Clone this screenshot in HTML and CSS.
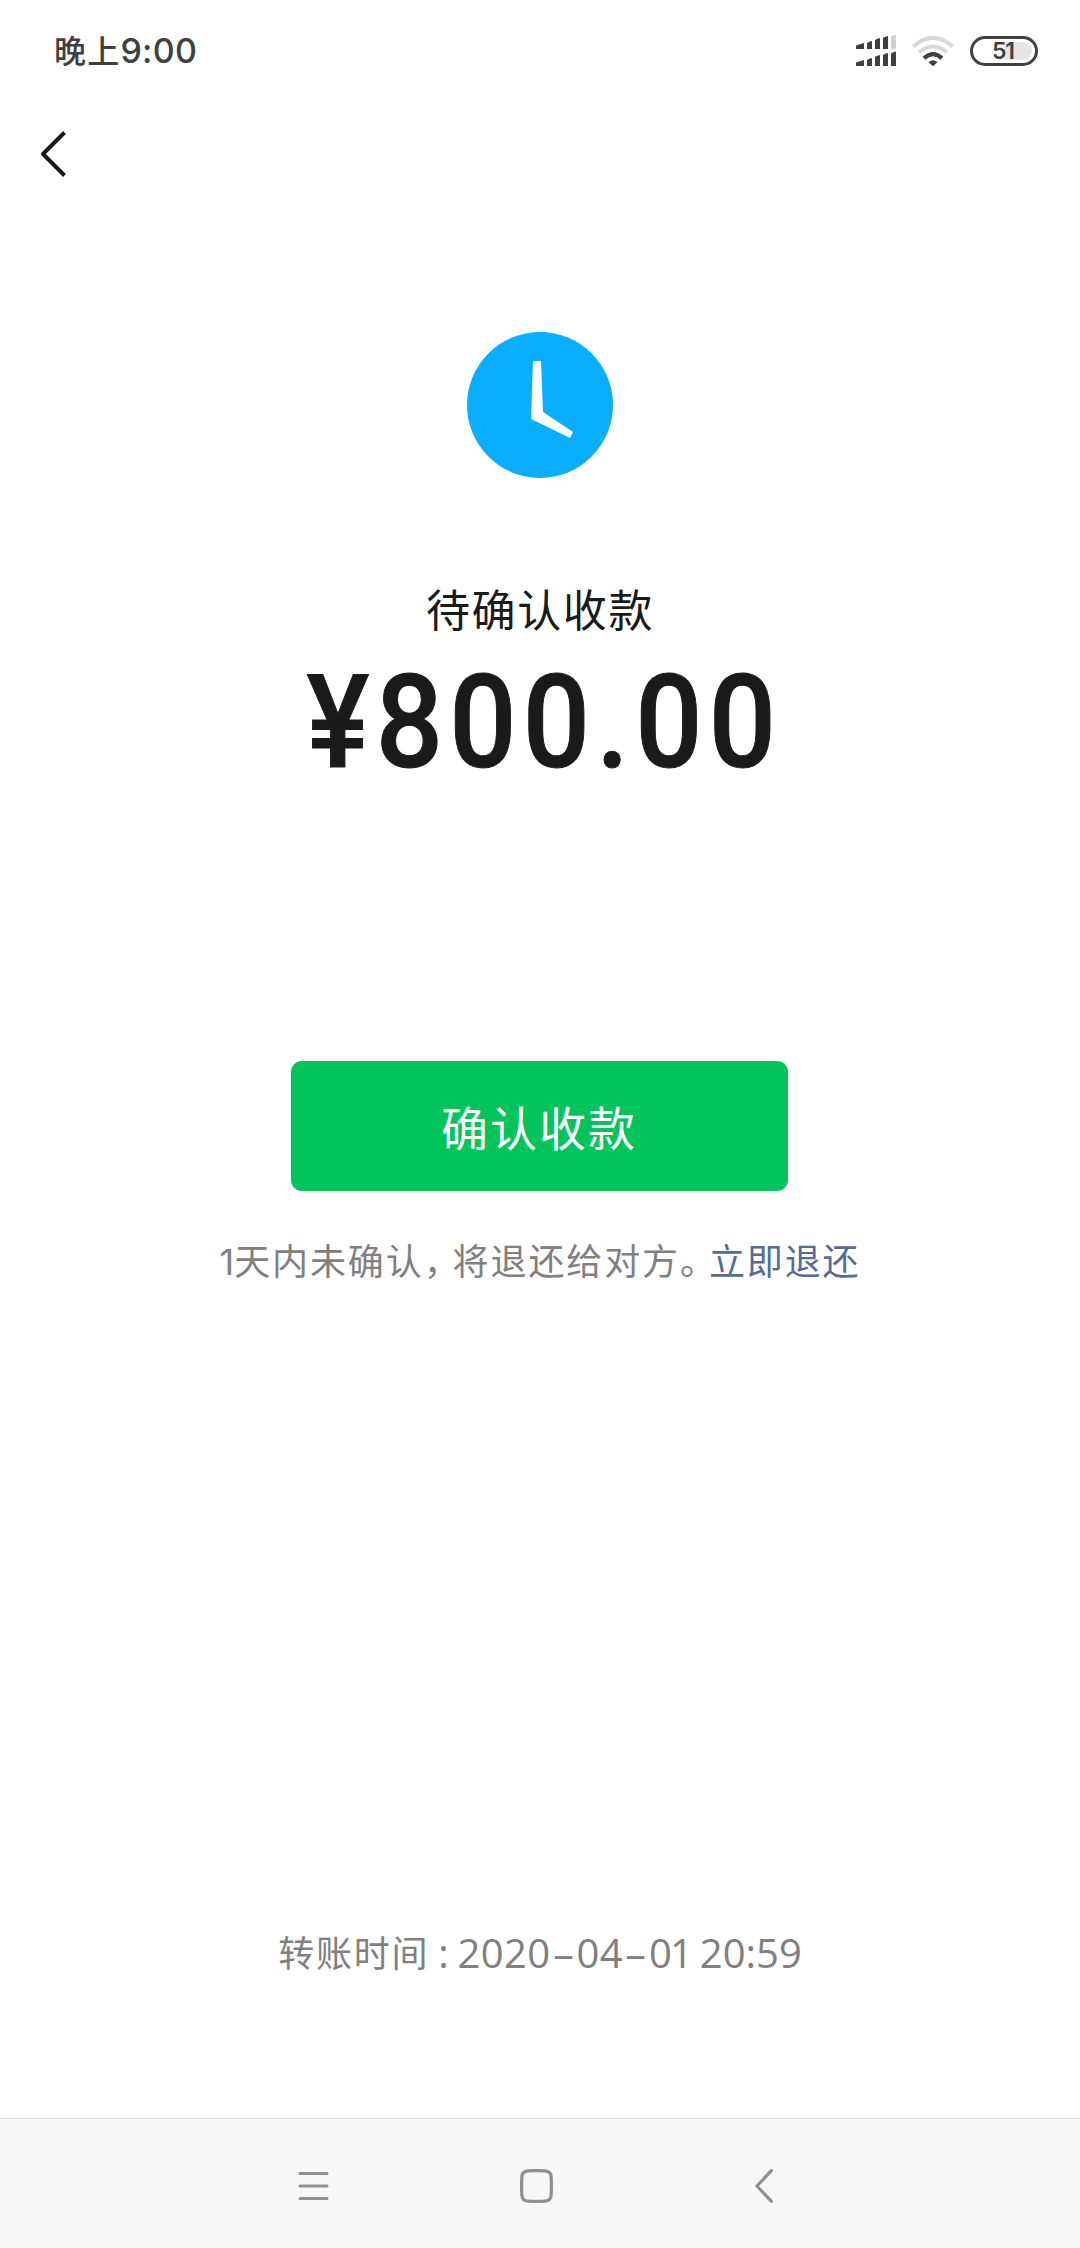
FILE: index.html
```html
<!DOCTYPE html>
<html lang="zh-CN">
<head>
<meta charset="utf-8">
<title>待确认收款</title>
<link rel="stylesheet" href="styles.css">
</head>
<body>
<div class="screen">
  <header class="status">
    <div class="time"><span class="period">晚上</span>9:00</div>
    <div class="indicators">
      <svg class="signal" width="40" height="32" viewBox="0 0 40 32" fill="#404040">
        <path d="M0 10.500q4-1.500 8-2.500v6H0zM11 8q2-1.500 5-2v8h-5zM19 5q2-1.500 5-2v11h-5zM27 3q2-1.500 5-2v13h-5z"/>
        <path fill="#d0d0d0" d="M35 1.500Q37 0 40 0v14h-5z"/>
        <path d="M0 27.500q4-1.500 8-2.500v6H0zM11 25q2-1.500 5-2v8h-5zM19 22q2-1.500 5-2v11h-5zM27 20q2-1.500 5-2v13h-5zM35 18.500q2-1.500 5-2v14.500h-5z"/>
      </svg>
      <svg class="wifi" width="42" height="30" viewBox="0 0 42 30" fill="none" stroke-width="4">
        <path stroke="#d8d8d8" d="M1.200 10.500Q21-6.500 40.800 10.500M7 16.500Q21 4.500 35 16.500"/>
        <path stroke="#404040" d="M12 22.300Q21 14 30 22.300"/>
        <path fill="#404040" d="M16.500 26Q21 22.500 25.500 26L22 29.500q-1 .8-2 0z"/>
      </svg>
      <div class="battery"><span class="level"></span><span class="percent">51</span></div>
    </div>
  </header>
  <div class="toolbar">
    <svg width="28" height="50" viewBox="0 0 28 50" fill="none" stroke="#1a1a1a" stroke-width="4" stroke-linejoin="round"><path d="M25.500 3.500L4 25l21.500 21.500"/></svg>
  </div>
  <main class="content">
    <svg class="clock" width="146" height="146" viewBox="0 0 146 146"><circle cx="73" cy="73" r="73" fill="#0aaeff"/><path fill="#fff" d="M66 29h8l2 51 30 20-3 6-39-19z"/></svg>
    <h1 class="title">待确认收款</h1>
    <div class="amount">¥800.00</div>
    <button class="confirm">确认收款</button>
    <p class="note"><span class="day">1</span>天内未确认<span class="comma">，</span>将退还给对方<span class="stop">。</span><a class="refund">立即退还</a></p>
    <p class="transfer"><span class="label">转账时间</span><span class="colon">:</span><span class="date">2020<span class="dash">-</span>04<span class="dash">-</span><span class="last">01</span></span><span class="clocktime">20:59</span></p>
  </main>
  <nav class="navbar">
    <svg class="menu" width="31" height="30" viewBox="0 0 31 30" stroke="#8f8f8f" stroke-width="3" stroke-linecap="round"><path d="M2 2.500h27M2 15h27M2 27.500h27"/></svg>
    <svg class="home" width="33" height="34" viewBox="0 0 31 32" fill="none" stroke="#8f8f8f" stroke-width="3"><path d="M7.500 1.700Q15.500 1.300 23.500 1.700 29 2 29.300 7.500q.4 8.500 0 17-.3 5.500-5.800 5.800-8 .4-16 0-5.500-.3-5.800-5.800-.4-8.500 0-17Q2 2 7.500 1.700z"/></svg>
    <svg class="back" width="19" height="34" viewBox="0 0 18 32" fill="none" stroke="#8f8f8f" stroke-width="3" stroke-linecap="round" stroke-linejoin="round"><path d="M15.500 1.500L1.800 16l13.700 14.500"/></svg>
  </nav>
</div>
</body>
</html>
```
FILE: styles.css
```css
body { margin: 0; background: #fff; font-family: "Inter", "Noto Sans CJK SC", sans-serif; }
svg { display: block; }
.screen { width: 1080px; height: 2248px; display: flex; flex-direction: column; }
.status { height: 102px; padding: 0 42px 0 54px; display: flex; justify-content: space-between; align-items: center; box-sizing: border-box; color: #404040; }
.time { font-size: 34px; font-weight: 500; letter-spacing: .3px; line-height: 50px; white-space: nowrap; }
.period { font-size: 32px; letter-spacing: 1.2px; }
.indicators { display: flex; align-items: center; }
.wifi { margin-left: 16px; }
.battery { position: relative; width: 68px; height: 30px; box-sizing: border-box; border: 3px solid #404040; border-radius: 15px; margin-left: 16px; padding-right: 2px; font-size: 23px; font-weight: 600; line-height: 24px; letter-spacing: -1px; text-align: center; }
.level { position: absolute; right: 3px; top: 3px; width: 28px; height: 18px; border-radius: 0 9px 9px 0; background: #e5e5e5; }
.percent { position: relative; }
.toolbar { height: 104px; padding-left: 39px; display: flex; align-items: center; }
.content { flex: 1; display: flex; flex-direction: column; align-items: center; }
.clock { margin-top: 126px; }
.title { margin: 103px 0 0; font-size: 44px; line-height: 60px; font-weight: 400; letter-spacing: 1.6px; color: #1a1a1a; }
.amount { margin: 7px 0 0 8px; font: 500 130px/150px "Roboto", sans-serif; letter-spacing: 6.900px; transform: scaleX(.91); color: #1a1a1a; -webkit-text-stroke: 1px #1a1a1a; }
.confirm { margin: 263px 2px 0 0; width: 497px; height: 130px; padding: 0; border: 0; border-radius: 11px; background: #02c45c; color: #fff; font: 400 47px/130px "Noto Sans CJK SC", sans-serif; letter-spacing: 2px; }
.note { margin: 46px 0 0; font-size: 36px; line-height: 50px; letter-spacing: 1.9px; color: #808080; white-space: nowrap; }
.day { letter-spacing: 0; }
.comma, .stop { font-feature-settings: "halt"; margin-right: 9px; }
.refund { color: #576b95; }
.transfer { display: flex; margin: 641px 0 0; font: 40px/50px "Open Sans", "Noto Sans CJK SC", sans-serif; color: #808080; white-space: nowrap; }
.label { font-size: 36px; line-height: 52px; letter-spacing: 1.8px; }
.colon { width: 28px; text-align: center; }
.date { letter-spacing: .4px; }
.dash { display: inline-block; transform: scaleX(1.8); width: 26px; text-align: center; }
.last { letter-spacing: -2px; }
.clocktime { margin-left: 9px; }
.navbar { height: 130px; box-sizing: border-box; border-top: 1px solid #d9d9d9; background: #f7f7f7; display: flex; align-items: center; padding: 5px 0 0 298px; }
.home { margin-left: 191px; }
.back { margin-left: 202px; }
```
